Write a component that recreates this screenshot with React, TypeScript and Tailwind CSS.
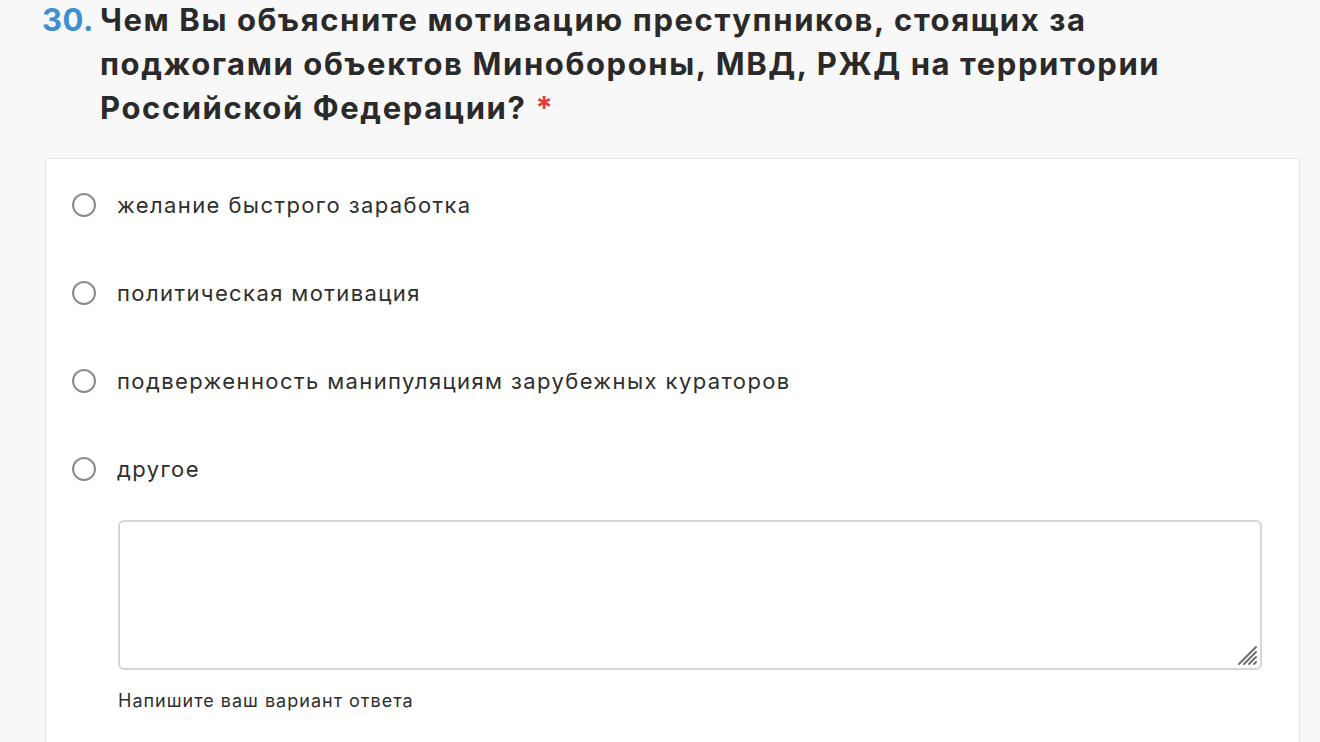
const options = [
  'желание быстрого заработка',
  'политическая мотивация',
  'подверженность манипуляциям зарубежных кураторов',
  'другое',
];

function Radio() {
  return <span className="h-[24px] w-[24px] shrink-0 rounded-full border-[2.5px] border-[#8c8c8c] bg-white" />;
}

export default function App() {
  return (
    <div className="h-[742px] overflow-hidden bg-[#f8f8f8] font-['Inter',sans-serif] text-[#262626]">
      <div className="-mt-[2px] flex pl-[42px] pr-[40px]">
        <span className="w-[58px] shrink-0 text-[31px] font-bold leading-[44px] tracking-[0.5px] text-[#3d8fd4]">30.</span>
        <h1 className="text-[31px] font-bold leading-[44px] tracking-[1.6px] text-[#2a2a2a]">
          Чем Вы объясните мотивацию преступников, стоящих за<br />
          поджогами объектов Минобороны, МВД, РЖД на территории<br />
          Российской Федерации? <span className="text-[#e53935]">*</span>
        </h1>
      </div>

      <div className="ml-[45px] mr-[20px] mt-[28px] border border-[#e6e6e6] bg-white pl-[26px] pr-[37px] pt-[34px]">
        <div className="flex flex-col gap-[64px]">
          {options.map((o) => (
            <label key={o} className="flex h-[24px] items-center gap-[21px]">
              <Radio />
              <span className="text-[22px] leading-[24px] tracking-[1.4px] text-[#2e2e2e]">{o}</span>
            </label>
          ))}
        </div>
        <div className="ml-[46px] mt-[39px]">
          <div className="relative">
            <textarea className="block h-[150px] w-full resize-none rounded-[6px] border-2 border-[#d6d6d6] bg-white outline-none" />
            <svg className="absolute bottom-[4px] right-[4px] h-[22px] w-[22px]" viewBox="0 0 22 22">
              <g stroke="#6e6e6e" strokeWidth="2" strokeLinecap="round">
                <line x1="3" y1="20" x2="20" y2="3" />
                <line x1="8" y1="20" x2="20" y2="8" />
                <line x1="13" y1="20" x2="20" y2="13" />
                <line x1="18" y1="20" x2="20" y2="18" />
              </g>
            </svg>
          </div>
          <p className="mt-[21px] pb-[40px] text-[18px] leading-[20px] tracking-[1px] text-[#2e2e2e]">Напишите ваш вариант ответа</p>
        </div>
      </div>
    </div>
  );
}
